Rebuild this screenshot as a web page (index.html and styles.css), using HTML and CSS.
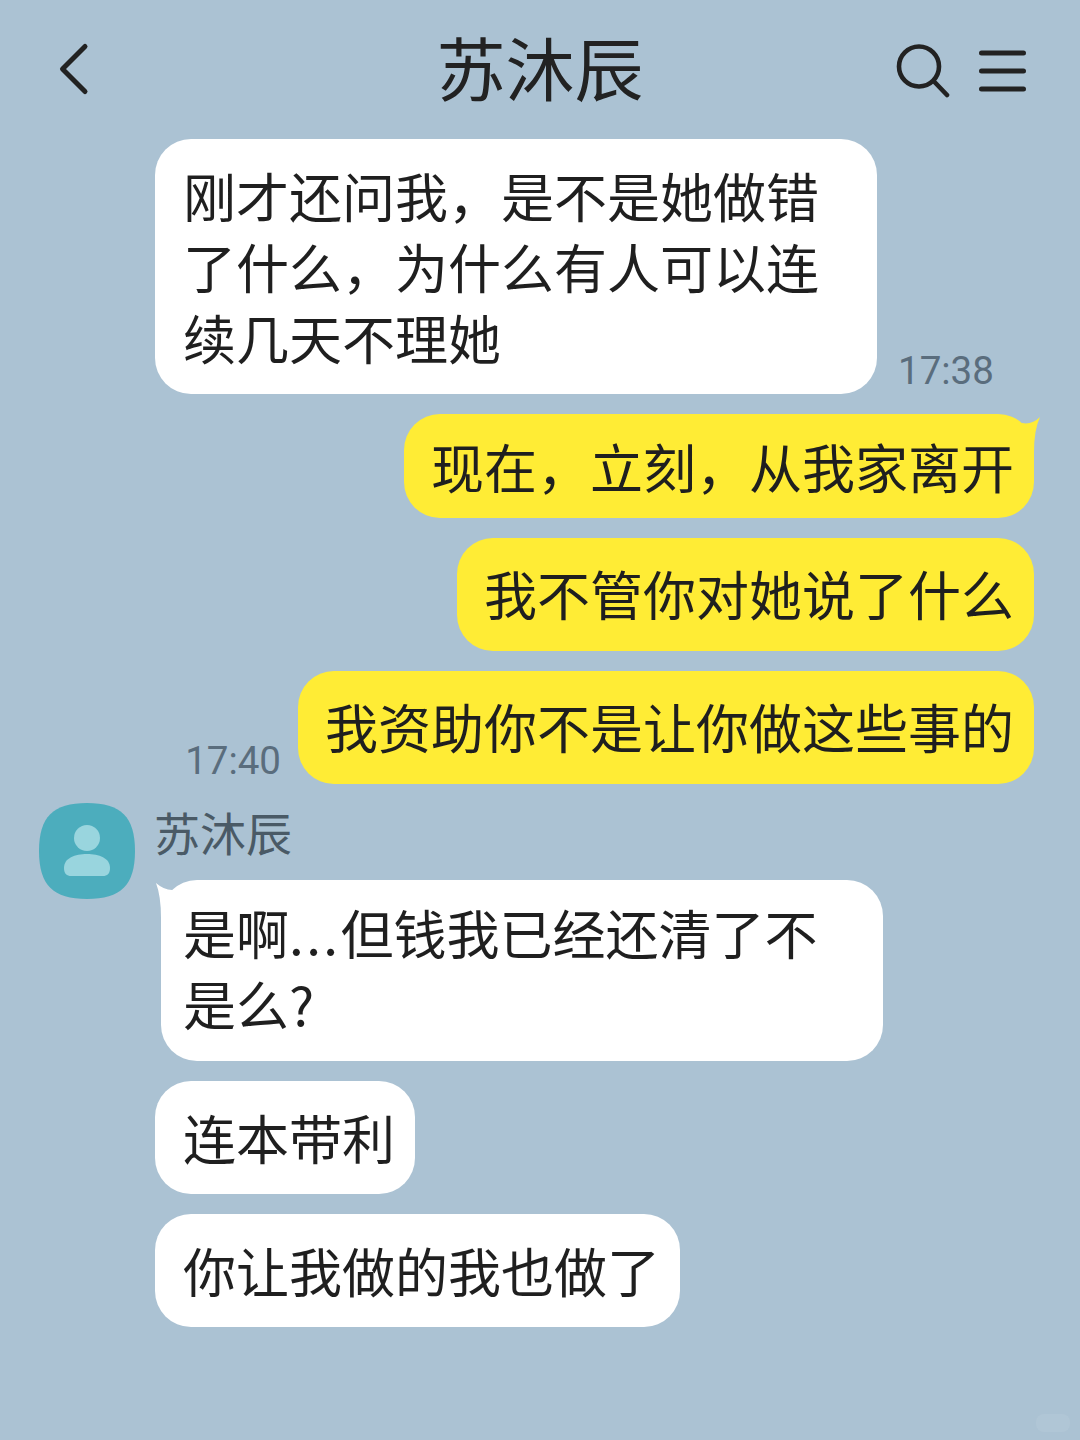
FILE: index.html
```html
<!DOCTYPE html>
<html lang="zh-CN">
<head>
<meta charset="utf-8">
<title>苏沐辰</title>
<link rel="stylesheet" href="styles.css">
</head>
<body>
<div class="screen">
  <header class="topbar">
    <svg class="back" width="34" height="56" viewBox="0 0 34 56"><path d="M27 4.5 L4.5 27 L27 49.5" /></svg>
    <h1 class="title">苏沐辰</h1>
    <div class="actions">
      <svg class="search" width="56" height="56" viewBox="0 0 56 56"><circle cx="23" cy="24.5" r="20"/><path d="M39 40.5 L51 53"/></svg>
      <svg class="menu" width="50" height="46" viewBox="0 0 50 46"><path d="M3.5 6 H45.5 M3.5 24 H45.5 M3.5 42 H45.5"/></svg>
    </div>
  </header>
  <main class="messages">
    <div class="row in">
      <div class="bubble white">刚才还问我，是不是她做错了什么，为什么有人可以连续几天不理她</div>
      <span class="time">17:38</span>
    </div>
    <div class="row out">
      <div class="bubble yellow tail-right slim">现在，立刻，从我家离开</div>
    </div>
    <div class="row out">
      <div class="bubble yellow">我不管你对她说了什么</div>
    </div>
    <div class="row out tight">
      <span class="time">17:40</span>
      <div class="bubble yellow">我资助你不是让你做这些事的</div>
    </div>
    <div class="sender">
      <div class="avatar">
        <svg width="96" height="96" viewBox="0 0 96 96"><path class="squircle" d="M48 0 C82 0 96 14 96 48 C96 82 82 96 48 96 C14 96 0 82 0 48 C0 14 14 0 48 0 Z"/><circle class="figure" cx="48" cy="35" r="13"/><path class="figure" d="M25 65 C25 55 36 51 48 51 C60 51 71 55 71 65 C71 71 68 73 64 73 H32 C28 73 25 71 25 65 Z"/></svg>
      </div>
      <div class="sender-body">
        <div class="name">苏沐辰</div>
        <div class="bubble white tail-left first">是啊<span class="dots">...</span>但钱我已经还清了不<br>是么?</div>
      </div>
    </div>
    <div class="row in">
      <div class="bubble white">连本带利</div>
    </div>
    <div class="row in">
      <div class="bubble white">你让我做的我也做了</div>
    </div>
  </main>
  <div class="watermark"></div>
</div>
</body>
</html>
```
FILE: styles.css
```css
* { box-sizing: border-box; }
html, body { margin: 0; padding: 0; }
body {
  width: 1080px;
  height: 1440px;
  overflow: hidden;
  background: #abc2d3;
  font-family: "Noto Sans CJK SC", "Noto Sans", sans-serif;
  color: #1f1f1f;
}
.screen { display: flex; flex-direction: column; height: 1440px; position: relative; }
.topbar {
  height: 139px;
  flex: none;
  display: flex;
  align-items: center;
  justify-content: space-between;
  padding: 0 52px 0 58px;
  position: relative;
}
.topbar svg { fill: none; stroke: #222; stroke-linecap: round; stroke-linejoin: round; }
.back { stroke-width: 5; }
.search { stroke-width: 4.6; }
.menu { stroke-width: 5; stroke: #2a2a2a; }
.title {
  position: absolute;
  left: 0;
  right: 0;
  top: 21px;
  margin: 0;
  text-align: center;
  font-size: 69px;
  line-height: 90px;
  font-weight: 400;
  color: #222;
}
.actions { display: flex; align-items: center; gap: 26px; }
.messages { display: flex; flex-direction: column; gap: 20px; padding: 0 46px 0 155px; }
.row { display: flex; align-items: flex-end; gap: 21px; }
.row.tight { gap: 17px; }
.row.out { justify-content: flex-end; }
.bubble {
  flex: none;
  max-width: 722px;
  padding: 21px 20px 21px 28px;
  font-size: 53px;
  line-height: 71px;
  border-radius: 36px;
  position: relative;
}
.white { background: #fff; }
.yellow { background: #ffec35; padding: 20px 20px 22px 27px; max-width: none; }
.slim { padding-top: 17px; padding-bottom: 16px; }
.time {
  font-family: Roboto, sans-serif;
  font-weight: 400;
  font-size: 38.5px;
  line-height: 46px;
  color: #5a6d7d;
}
.tail-right::after {
  content: "";
  position: absolute;
  right: -6px;
  top: 2px;
  width: 18px;
  height: 36px;
  background: #ffec35;
  clip-path: path("M18 1 Q 10 9 0 7 L 0 36 L 12 36 Q 12 14 18 1 Z");
}
.tail-left::before {
  content: "";
  position: absolute;
  left: -5px;
  top: 2px;
  width: 20px;
  height: 36px;
  background: #fff;
  clip-path: path("M0 1 Q 8 8 16 8 L 16 36 L 5 36 Q 5 14 0 1 Z");
}
.sender { display: flex; gap: 21px; margin-left: -116px; }
.avatar { width: 96px; height: 96px; flex: none; margin-top: -1px; }
.squircle { fill: #4cadbd; }
.figure { fill: #99d5de; }
.sender-body { display: flex; flex-direction: column; }
.name {
  font-size: 46px;
  line-height: 62px;
  margin: -4px 0 18px -2px;
  color: #4a5a66;
}
.first { margin-left: 5px; padding-left: 22px; padding-top: 17px; padding-bottom: 22px; width: 722px; }
.dots { letter-spacing: 2.4px; }
.watermark {
  position: absolute;
  right: 10px;
  bottom: 8px;
  width: 34px;
  height: 18px;
  border-radius: 8px;
  background: rgba(255, 255, 255, 0.07);
}
```
